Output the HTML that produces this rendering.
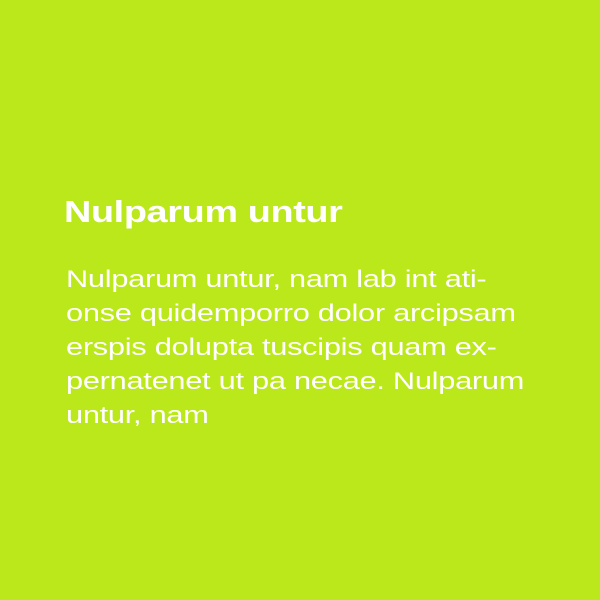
<!DOCTYPE html>
<html><head><style>
html,body{margin:0;padding:0;}
body{width:600px;height:600px;background:#bbe81a;overflow:hidden;position:relative;font-family:"Liberation Sans",sans-serif;color:#fff;}
h1{position:absolute;left:64px;top:192px;margin:0;font-size:31px;font-weight:bold;line-height:40px;letter-spacing:-0.3px;transform:scaleX(1.22);transform-origin:left top;white-space:nowrap;}
p{position:absolute;left:66px;top:263px;margin:0;font-size:24px;line-height:34px;letter-spacing:-0.2px;white-space:nowrap;transform:scaleX(1.28);transform-origin:left top;}
</style></head><body>
<h1>Nulparum untur</h1>
<p>Nulparum untur, nam lab int ati-<br>onse quidemporro dolor arcipsam<br>erspis dolupta tuscipis quam ex-<br>pernatenet ut pa necae. Nulparum<br>untur, nam</p>
</body></html>
